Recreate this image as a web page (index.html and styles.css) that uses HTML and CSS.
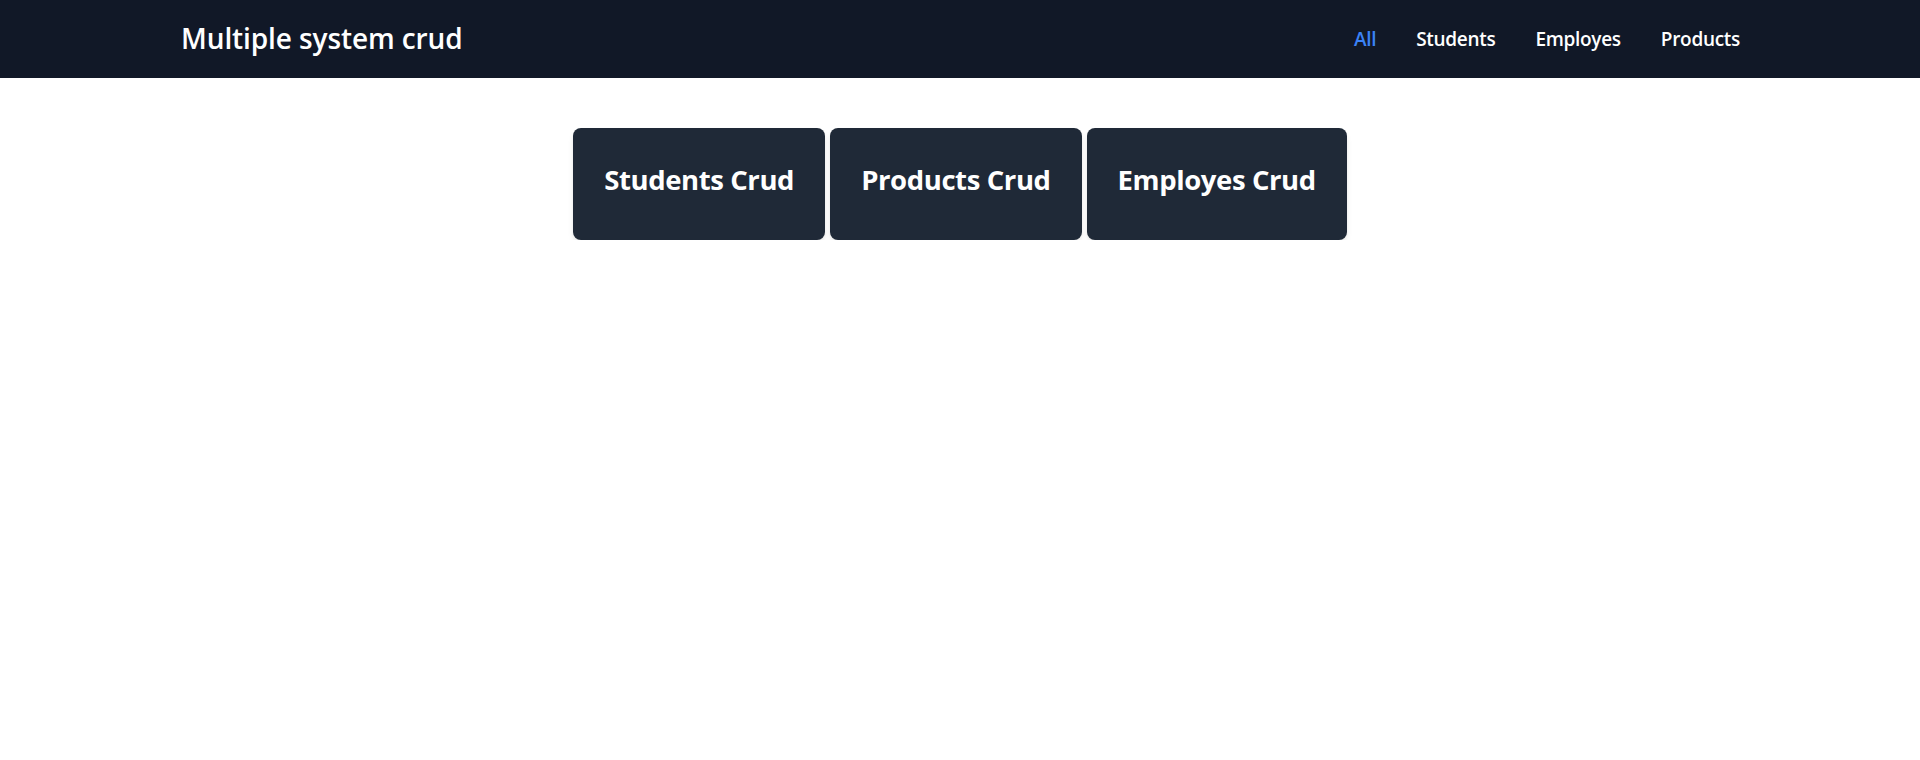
FILE: index.html
```html
<!DOCTYPE html>
<html lang="en">
<head>
<meta charset="utf-8">
<title>Multiple system crud</title>
<link rel="stylesheet" href="styles.css">
</head>
<body>
<header class="navbar">
  <div class="brand">Multiple system crud</div>
  <nav class="nav-links">
    <a class="nav-link active" href="#">All</a>
    <a class="nav-link" href="#">Students</a>
    <a class="nav-link" href="#">Employes</a>
    <a class="nav-link" href="#">Products</a>
  </nav>
</header>
<main class="content">
  <div class="cards">
    <a class="card" href="#">Students Crud</a>
    <a class="card" href="#">Products Crud</a>
    <a class="card" href="#">Employes Crud</a>
  </div>
</main>
</body>
</html>
```
FILE: styles.css
```css
* { box-sizing: border-box; }
html, body { margin: 0; padding: 0; background: #ffffff; }
body { font-family: "Open Sans", "Noto Sans", sans-serif; }

.navbar {
  height: 78px;
  background: #111827;
  display: flex;
  align-items: center;
  justify-content: space-between;
  padding: 0 180px 0 181px;
}
.brand {
  color: #ffffff;
  font-size: 28px;
  font-weight: 600;
  letter-spacing: -0.1px;
  padding-bottom: 2px;
}
.nav-links {
  display: flex;
  gap: 40px;
}
.nav-link {
  color: #ffffff;
  text-decoration: none;
  font-size: 19px;
  font-weight: 600;
  letter-spacing: -0.3px;
}
.nav-link.active { color: #3b82f6; }

.content {
  padding-top: 50px;
}
.cards {
  display: flex;
  justify-content: center;
  gap: 5px;
}
.card {
  display: block;
  background: #1f2937;
  color: #ffffff;
  text-decoration: none;
  border-radius: 8px;
  font-size: 27.5px;
  font-weight: 700;
  letter-spacing: -0.4px;
  line-height: 36px;
  padding: 34px 31px 42px;
  box-shadow: 0 4px 6px -1px rgba(0,0,0,0.1), 0 2px 4px -2px rgba(0,0,0,0.1);
}
```
